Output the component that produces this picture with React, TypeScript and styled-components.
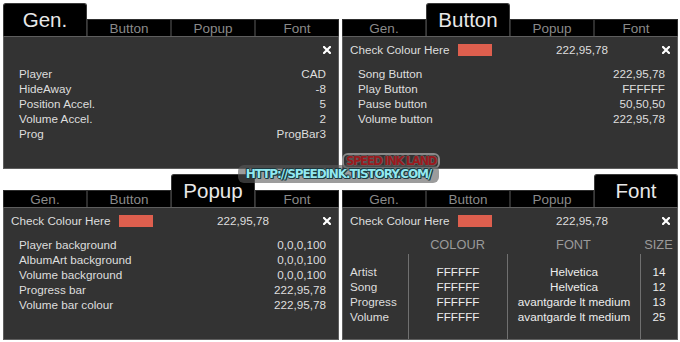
import React from "react";
import styled, { createGlobalStyle } from "styled-components";

const Global = createGlobalStyle`
  html, body { margin: 0; padding: 0; background: #ffffff; }
  body { font-family: "Liberation Sans", Arial, sans-serif; }
`;

const Page = styled.div`
  position: relative;
  width: 680px;
  height: 342px;
  box-sizing: border-box;
  padding: 3px 0 0 3px;
  display: grid;
  grid-template-columns: 336px 336px;
  grid-template-rows: 166px 166px;
  column-gap: 3px;
  row-gap: 5px;
`;

const Panel = styled.section`
  display: flex;
  flex-direction: column;
`;

const TabBar = styled.div`
  display: flex;
  align-items: flex-end;
  height: 33px;
  flex: none;
`;

const Tab = styled.div<{ $active?: boolean }>`
  box-sizing: border-box;
  width: 84px;
  height: ${(p) => (p.$active ? "33px" : "17px")};
  background: #000;
  border: 1px solid ${(p) => (p.$active ? "#3a3a3a" : "#2e2e2e")};
  border-bottom: none;
  border-radius: ${(p) => (p.$active ? "3px 3px 0 0" : "0")};
  display: flex;
  align-items: center;
  justify-content: center;
  color: ${(p) => (p.$active ? "#e8e8e8" : "#8a8a8a")};
  font-size: ${(p) => (p.$active ? "20.5px" : "13.5px")};
  line-height: 1;
  padding-top: ${(p) => (p.$active ? "0" : "1px")};
`;

const Body = styled.div`
  flex: 1;
  box-sizing: border-box;
  background: #333333;
  border: 1px solid #5e5e5e;
  display: flex;
  flex-direction: column;
  color: #dedede;
  font-size: 11.7px;
`;

const Header = styled.div`
  display: grid;
  grid-template-columns: 108px 98px 1fr auto;
  align-items: center;
  height: 14px;
  margin: 6px 7px 0 7px;
  line-height: 14px;
`;

const Swatch = styled.div<{ $color: string }>`
  width: 34px;
  height: 12px;
  background: ${(p) => p.$color};
`;

const Close = styled.svg`
  grid-column: 4;
  width: 8px;
  height: 8px;
  display: block;
`;

const List = styled.div`
  margin-top: 8.5px;
  padding: 0 12px 0 15px;
  display: flex;
  flex-direction: column;
`;

const Row = styled.div`
  display: flex;
  justify-content: space-between;
  line-height: 15px;
  height: 15px;
`;

const Table = styled.div`
  flex: 1;
  margin-top: 8.5px;
  display: grid;
  grid-template-columns: 65px 99px 133px 1fr;
  grid-template-rows: 17.5px 1fr;
`;

const HeadCell = styled.div`
  text-align: center;
  color: #9a9a9a;
  font-size: 12.8px;
  line-height: 15px;
`;

const Column = styled.div<{ $first?: boolean }>`
  border-left: ${(p) => (p.$first ? "none" : "1px solid #707070")};
  padding-top: 9.5px;
  padding-left: ${(p) => (p.$first ? "7px" : "0")};
  text-align: ${(p) => (p.$first ? "left" : "center")};
  color: ${(p) => (p.$first ? "#dedede" : "#ededed")};
`;

const Cell = styled.div`
  line-height: 15px;
  height: 15px;
  white-space: nowrap;
`;

const Watermark = styled.div`
  position: absolute;
  pointer-events: none;
  box-sizing: border-box;
  display: flex;
  align-items: center;
  justify-content: center;
  white-space: nowrap;
  font-family: "DejaVu Sans", sans-serif;
  font-weight: 900;
  border-radius: 6px;
`;

const InkLand = styled(Watermark)`
  left: 342px;
  top: 153px;
  width: 98px;
  height: 16px;
  background: rgba(50, 50, 50, 0.92);
  border: 2px solid #8a8a8a;
  font-size: 11.5px;
  letter-spacing: -1.3px;
  color: #9a1a1e;
  text-shadow: -1px 0 #5a5a5a, 1px 0 #5a5a5a, 0 -1px #5a5a5a, 0 1px #5a5a5a;
`;

const Url = styled(Watermark)`
  left: 238px;
  top: 165px;
  width: 201px;
  height: 18px;
  background: rgba(90, 90, 90, 0.6);
  font-size: 12px;
  letter-spacing: -1.1px;
  color: #92e8f0;
  text-shadow: -1px 0 #1c383e, 1px 0 #1c383e, 0 -1px #1c383e, 0 1px #1c383e,
    1px 1px #1c383e, -1px -1px #1c383e;
`;

const TABS = ["Gen.", "Button", "Popup", "Font"];
const SWATCH = "#de5f4e";

const CloseIcon = () => (
  <Close viewBox="0 0 8 8">
    <path d="M1 1 L7 7 M7 1 L1 7" stroke="#ffffff" strokeWidth="2.2" strokeLinecap="square" />
  </Close>
);

const Tabs = ({ active }: { active: number }) => (
  <TabBar>
    {TABS.map((t, i) => (
      <Tab key={t} $active={i === active}>
        {t}
      </Tab>
    ))}
  </TabBar>
);

const ColourHeader = () => (
  <Header>
    <span>Check Colour Here</span>
    <Swatch $color={SWATCH} />
    <span>222,95,78</span>
    <CloseIcon />
  </Header>
);

const Rows = ({ rows }: { rows: [string, string][] }) => (
  <List>
    {rows.map(([k, v]) => (
      <Row key={k}>
        <span>{k}</span>
        <span>{v}</span>
      </Row>
    ))}
  </List>
);

const genRows: [string, string][] = [
  ["Player", "CAD"],
  ["HideAway", "-8"],
  ["Position Accel.", "5"],
  ["Volume Accel.", "2"],
  ["Prog", "ProgBar3"],
];

const buttonRows: [string, string][] = [
  ["Song Button", "222,95,78"],
  ["Play Button", "FFFFFF"],
  ["Pause button", "50,50,50"],
  ["Volume button", "222,95,78"],
];

const popupRows: [string, string][] = [
  ["Player background", "0,0,0,100"],
  ["AlbumArt background", "0,0,0,100"],
  ["Volume background", "0,0,0,100"],
  ["Progress bar", "222,95,78"],
  ["Volume bar colour", "222,95,78"],
];

const fontRows = [
  ["Artist", "FFFFFF", "Helvetica", "14"],
  ["Song", "FFFFFF", "Helvetica", "12"],
  ["Progress", "FFFFFF", "avantgarde lt medium", "13"],
  ["Volume", "FFFFFF", "avantgarde lt medium", "25"],
];

const App = () => (
  <>
    <Global />
    <Page>
      <Panel>
        <Tabs active={0} />
        <Body>
          <Header>
            <CloseIcon />
          </Header>
          <Rows rows={genRows} />
        </Body>
      </Panel>
      <Panel>
        <Tabs active={1} />
        <Body>
          <ColourHeader />
          <Rows rows={buttonRows} />
        </Body>
      </Panel>
      <Panel>
        <Tabs active={2} />
        <Body>
          <ColourHeader />
          <Rows rows={popupRows} />
        </Body>
      </Panel>
      <Panel>
        <Tabs active={3} />
        <Body>
          <ColourHeader />
          <Table>
            <HeadCell />
            <HeadCell>COLOUR</HeadCell>
            <HeadCell>FONT</HeadCell>
            <HeadCell>SIZE</HeadCell>
            {[0, 1, 2, 3].map((c) => (
              <Column key={c} $first={c === 0}>
                {fontRows.map((r) => (
                  <Cell key={r[0]}>{r[c]}</Cell>
                ))}
              </Column>
            ))}
          </Table>
        </Body>
      </Panel>
      <InkLand>SPEED INK LAND</InkLand>
      <Url>HTTP://SPEEDINK.TISTORY.COM/</Url>
    </Page>
  </>
);

export default App;
